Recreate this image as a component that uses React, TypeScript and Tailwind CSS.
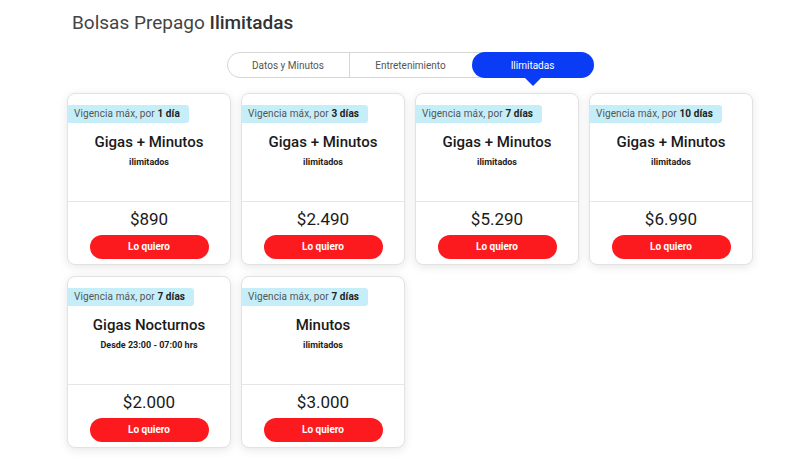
import React from "react";

type Plan = { days: string; title: string; sub: string; price: string };

const plans: Plan[] = [
  { days: "1 día", title: "Gigas + Minutos", sub: "ilimitados", price: "$890" },
  { days: "3 días", title: "Gigas + Minutos", sub: "ilimitados", price: "$2.490" },
  { days: "7 días", title: "Gigas + Minutos", sub: "ilimitados", price: "$5.290" },
  { days: "10 días", title: "Gigas + Minutos", sub: "ilimitados", price: "$6.990" },
  { days: "7 días", title: "Gigas Nocturnos", sub: "Desde 23:00 - 07:00 hrs", price: "$2.000" },
  { days: "7 días", title: "Minutos", sub: "ilimitados", price: "$3.000" },
];

function Card({ p }: { p: Plan }) {
  return (
    <div className="w-[164px] h-[172px] bg-white border border-[#e2e2e2] rounded-[8px] shadow-[0_2px_10px_rgba(0,0,0,0.10)] flex flex-col overflow-hidden">
      <div className="h-[108px] flex flex-col border-b border-[#e6e6e6]">
        <div className="mt-[11px] self-start h-[18px] pl-[6px] pr-[9px] bg-[#c6eef8] rounded-r-[3px] flex items-center text-[10px] text-[#555] leading-none whitespace-nowrap tracking-[0.1px]">
          Vigencia máx, por&nbsp;<span className="font-bold text-[#222]">{p.days}</span>
        </div>
        <div className="mt-[12px] text-center text-[15px] font-medium text-[#1a1a1a] leading-none">{p.title}</div>
        <div className="mt-[8px] text-center text-[9px] font-bold text-[#222] leading-none">{p.sub}</div>
      </div>
      <div className="flex-1 flex flex-col items-center">
        <div className="mt-[9px] text-[17px] text-[#1a1a1a] leading-none">{p.price}</div>
        <button className="mt-[7px] w-[119px] h-[24px] rounded-full bg-[#fd1a1f] text-white text-[10px] font-bold leading-none">
          Lo quiero
        </button>
      </div>
    </div>
  );
}

export default function App() {
  return (
    <div className="w-[800px] h-[470px] bg-white relative" style={{ fontFamily: "Roboto, 'Liberation Sans', sans-serif" }}>
      <div className="pt-[12px] pl-[72px] text-[19px] text-[#444] leading-[22px]">
        Bolsas Prepago <span className="font-medium text-[#333]">Ilimitadas</span>
      </div>
      <div className="mt-[18px] flex justify-center pl-[20px]">
        <div className="flex h-[26px] rounded-full border border-[#d6d6d6] bg-white text-[10px]">
          <div className="w-[122px] flex items-center justify-center text-[#555] border-r border-[#d6d6d6]">Datos y Minutos</div>
          <div className="w-[122px] flex items-center justify-center text-[#555]">Entretenimiento</div>
          <div className="relative w-[122px] -my-px -mr-px flex items-center justify-center bg-[#0a3cf5] text-white rounded-full">
            Ilimitadas
            <div className="absolute left-1/2 -translate-x-1/2 top-full w-0 h-0 border-l-[8px] border-r-[8px] border-t-[8px] border-l-transparent border-r-transparent border-t-[#0a3cf5]" />
          </div>
        </div>
      </div>
      <div className="mt-[15px] ml-[67px] grid grid-cols-[164px_164px_164px_164px] gap-x-[10px] gap-y-[11px]">
        {plans.map((p, i) => (
          <Card key={i} p={p} />
        ))}
      </div>
    </div>
  );
}
